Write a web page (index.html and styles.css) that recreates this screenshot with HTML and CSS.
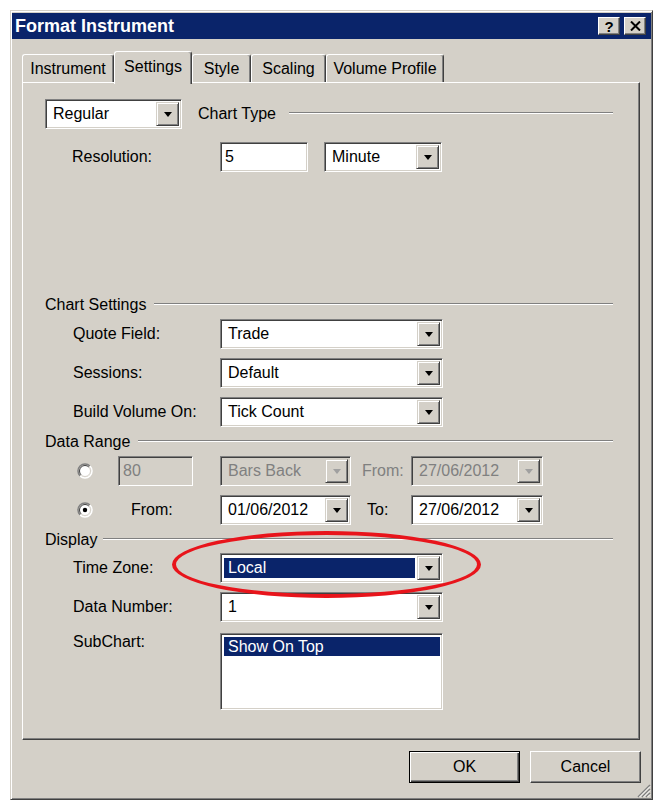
FILE: index.html
```html
<!DOCTYPE html>
<html lang="en">
<head>
    <meta charset="UTF-8">
    <meta name="viewport" content="width=device-width, initial-scale=1.0">
    <title>Format Instrument</title>
    <link rel="stylesheet" href="styles.css">
</head>
<body>
    <div class="window">
        <div class="titlebar">
            <span class="title">Format Instrument</span>
            <div class="caption-buttons">
                <span class="caption-btn help">?</span>
                <span class="caption-btn close">
                    <svg width="11" height="10" viewBox="0 0 11 10">
                        <path d="M1 0.5 L10 9.5 M10 0.5 L1 9.5" stroke="#000" stroke-width="2"/>
                    </svg>
                </span>
            </div>
        </div>

        <div class="tabs">
            <div class="tab tab-instrument">Instrument</div>
            <div class="tab tab-settings active">Settings</div>
            <div class="tab tab-style">Style</div>
            <div class="tab tab-scaling">Scaling</div>
            <div class="tab tab-volume">Volume Profile</div>
        </div>

        <div class="panel">
            <!-- chart type -->
            <div class="row row-chart-type">
                <div class="combo combo-regular"><span class="value">Regular</span><span class="drop"></span></div>
                <span class="group-title title-chart-type">Chart Type</span>
                <span class="groove"></span>
            </div>
            <div class="row row-resolution">
                <span class="label label-resolution">Resolution:</span>
                <div class="field field-resolution">5</div>
                <div class="combo combo-unit"><span class="value">Minute</span><span class="drop"></span></div>
            </div>

            <!-- chart settings -->
            <div class="group-head head-chart-settings">
                <span class="group-title">Chart Settings</span>
                <span class="groove"></span>
            </div>
            <div class="row row-field first">
                <span class="label">Quote Field:</span>
                <div class="combo combo-wide"><span class="value">Trade</span><span class="drop"></span></div>
            </div>
            <div class="row row-field">
                <span class="label">Sessions:</span>
                <div class="combo combo-wide"><span class="value">Default</span><span class="drop"></span></div>
            </div>
            <div class="row row-field build">
                <span class="label">Build Volume On:</span>
                <div class="combo combo-wide"><span class="value">Tick Count</span><span class="drop"></span></div>
            </div>

            <!-- data range -->
            <div class="group-head head-data-range">
                <span class="group-title">Data Range</span>
                <span class="groove"></span>
            </div>
            <div class="row row-range bars">
                <span class="radio">
                    <svg width="16" height="16" viewBox="0 0 16 16">
                        <circle cx="8" cy="8" r="6" fill="#fff"/>
                        <path d="M3.05 12.95 A7 7 0 0 1 12.95 3.05" stroke="#808080" stroke-width="1.5" fill="none"/>
                        <path d="M12.95 3.05 A7 7 0 0 1 3.05 12.95" stroke="#fff" stroke-width="1.5" fill="none"/>
                        <path d="M4.1 11.9 A5.5 5.5 0 0 1 11.9 4.1" stroke="#404040" stroke-width="1" fill="none"/>
                        <path d="M11.9 4.1 A5.5 5.5 0 0 1 4.1 11.9" stroke="#d4d0c8" stroke-width="1" fill="none"/>
                    </svg>
                </span>
                <div class="field field-bars disabled">80</div>
                <div class="combo combo-range disabled"><span class="value">Bars Back</span><span class="drop"></span></div>
                <span class="label label-from-off disabled">From:</span>
                <div class="combo combo-date disabled"><span class="value">27/06/2012</span><span class="drop"></span></div>
            </div>
            <div class="row row-range dates">
                <span class="radio">
                    <svg width="16" height="16" viewBox="0 0 16 16">
                        <circle cx="8" cy="8" r="6" fill="#fff"/>
                        <path d="M3.05 12.95 A7 7 0 0 1 12.95 3.05" stroke="#808080" stroke-width="1.5" fill="none"/>
                        <path d="M12.95 3.05 A7 7 0 0 1 3.05 12.95" stroke="#fff" stroke-width="1.5" fill="none"/>
                        <path d="M4.1 11.9 A5.5 5.5 0 0 1 11.9 4.1" stroke="#404040" stroke-width="1" fill="none"/>
                        <path d="M11.9 4.1 A5.5 5.5 0 0 1 4.1 11.9" stroke="#d4d0c8" stroke-width="1" fill="none"/>
                        <circle cx="8" cy="8" r="2.2" fill="#000"/>
                    </svg>
                </span>
                <span class="label label-from">From:</span>
                <div class="combo combo-range"><span class="value">01/06/2012</span><span class="drop"></span></div>
                <span class="label label-to">To:</span>
                <div class="combo combo-date"><span class="value">27/06/2012</span><span class="drop"></span></div>
            </div>

            <!-- display -->
            <div class="group-head head-display">
                <span class="group-title">Display</span>
                <span class="groove"></span>
            </div>
            <div class="row row-field tz">
                <span class="label">Time Zone:</span>
                <div class="combo combo-wide"><span class="value selected">Local</span><span class="drop"></span></div>
            </div>
            <div class="row row-field">
                <span class="label">Data Number:</span>
                <div class="combo combo-wide"><span class="value">1</span><span class="drop"></span></div>
            </div>
            <div class="row row-list">
                <span class="label">SubChart:</span>
                <div class="listbox">
                    <div class="list-item selected">Show On Top</div>
                </div>
            </div>
        </div>

        <div class="footer">
            <button class="btn default">OK</button>
            <button class="btn">Cancel</button>
        </div>

        <svg class="grip" width="16" height="16" viewBox="0 0 16 16">
            <path d="M15 3 L3 15 M15 7 L7 15 M15 11 L11 15" stroke="#808080" stroke-width="1.5"/>
            <path d="M15 4.5 L4.5 15 M15 8.5 L8.5 15 M15 12.5 L12.5 15" stroke="#fff" stroke-width="1"/>
        </svg>

        <div class="callout"></div>
    </div>
</body>
</html>
```

FILE: styles.css
```css
* {
    box-sizing: border-box;
}
body {
    margin: 0;
    background-color: #fff;
    font-family: "Liberation Sans", Arial, sans-serif;
    font-size: 16px;
    color: #000;
}

/* dialog frame */
.window {
    position: relative;
    display: flex;
    flex-direction: column;
    width: 643px;
    height: 790px;
    margin: 10px 0 0 10px;
    padding: 2px 1px 1px 1px;
    background-color: #d4d0c8;
    border: 1px solid;
    border-color: #d4d0c8 #404040 #404040 #d4d0c8;
    box-shadow: inset 1px 1px 0 #fff, inset -1px -1px 0 #808080;
}
.titlebar {
    display: flex;
    align-items: center;
    justify-content: space-between;
    height: 26px;
    padding: 0 5px 0 3px;
    background-color: #0a246a;
}
.title {
    color: #fff;
    font-weight: bold;
    font-size: 18px;
}
.caption-buttons {
    display: flex;
    gap: 4px;
}
.caption-btn {
    display: flex;
    align-items: center;
    justify-content: center;
    width: 22px;
    height: 18px;
    background-color: #d4d0c8;
    border: 1px solid;
    border-color: #fff #404040 #404040 #fff;
    box-shadow: inset -1px -1px 0 #808080;
    font-weight: bold;
    font-size: 15px;
    line-height: 1;
}

/* tab strip */
.tabs {
    display: flex;
    align-items: flex-end;
    height: 43px;
    padding-left: 10px;
}
.tab {
    display: flex;
    align-items: center;
    justify-content: center;
    height: 28px;
    padding-top: 1px;
    background-color: #d4d0c8;
    border: 1px solid;
    border-color: #fff #404040 transparent #fff;
    border-bottom: 0;
    border-radius: 3px 3px 0 0;
    box-shadow: inset -1px 0 0 #808080;
}
.tab.active {
    position: relative;
    z-index: 1;
    height: 33px;
    margin-bottom: -2px;
    padding-bottom: 4px;
}
.tab-instrument { width: 92px; }
.tab-settings { width: 78px; }
.tab-style { width: 59px; }
.tab-scaling { width: 75px; }
.tab-volume { width: 118px; }

.panel {
    display: flex;
    flex-direction: column;
    width: 618px;
    height: 658px;
    margin-left: 10px;
    padding: 16px 26px 0 22px;
    border: 1px solid;
    border-color: #fff #404040 #404040 #fff;
    box-shadow: inset -1px -1px 0 #808080;
}

/* rows */
.row {
    display: flex;
    align-items: center;
    height: 30px;
    flex-shrink: 0;
}
.label {
    flex-shrink: 0;
    white-space: nowrap;
}
.row-resolution { margin-top: 13px; }
.label-resolution {
    width: 148px;
    margin-left: 27px;
}
.row-field { margin-top: 9px; }
.row-field.first { margin-top: 5px; }
.row-field.tz { margin-top: 4px; }
.row-field .label,
.row-list .label {
    width: 147px;
    margin-left: 28px;
}

.group-head {
    display: flex;
    align-items: center;
    height: 18px;
    flex-shrink: 0;
}
.group-title {
    white-space: nowrap;
}
.groove {
    flex: 1;
    height: 2px;
    margin: 0 0 3px 8px;
    border-top: 1px solid #808080;
    border-bottom: 1px solid #fff;
}
.title-chart-type { margin-left: 16px; }
.row-chart-type .groove { margin-left: 13px; }
.head-chart-settings { margin-top: 124px; }
.head-data-range { margin-top: 6px; }
.head-display { margin-top: 6px; }
.head-display .groove { margin-left: 6px; }

/* inputs */
.field,
.combo,
.listbox {
    flex-shrink: 0;
    background-color: #fff;
    border: 1px solid;
    border-color: #808080 #fff #fff #808080;
    box-shadow: inset 1px 1px 0 #404040, inset -1px -1px 0 #d4d0c8;
}
.field {
    display: flex;
    align-items: center;
    height: 30px;
    padding-left: 4px;
}
.combo {
    display: flex;
    height: 30px;
    padding: 2px;
}
.combo .value {
    flex: 1;
    display: flex;
    align-items: center;
    margin: 2px 2px 2px 1px;
    padding-left: 4px;
    white-space: nowrap;
}
.combo .value.selected {
    background-color: #0a246a;
    color: #fff;
}
.drop {
    display: flex;
    align-items: center;
    justify-content: center;
    width: 23px;
    background-color: #d4d0c8;
    border: 1px solid;
    border-color: #d4d0c8 #404040 #404040 #d4d0c8;
    box-shadow: inset 1px 1px 0 #fff, inset -1px -1px 0 #808080;
}
.drop::after {
    content: "";
    border-style: solid;
    border-width: 5px 4.5px 0;
    border-color: #000 transparent transparent;
}
.disabled,
.combo.disabled .value {
    color: #808080;
}
.field.disabled,
.combo.disabled {
    background-color: #d4d0c8;
}
.combo.disabled .drop::after {
    border-top-color: #a0a0a0;
}

.combo-regular { width: 137px; }
.field-resolution { width: 88px; }
.combo-unit {
    width: 118px;
    margin-left: 16px;
}
.combo-wide { width: 223px; }

/* data range rows */
.row-range.bars { margin-top: 5px; }
.row-range.dates { margin-top: 9px; }
.radio {
    display: flex;
    width: 16px;
    height: 16px;
    margin-left: 32px;
}
.field-bars {
    width: 75px;
    margin-left: 25px;
}
.combo-range {
    width: 131px;
}
.bars .combo-range { margin-left: 27px; }
.label-from-off {
    width: 49px;
    margin-left: 11px;
}
.combo-date { width: 132px; }
.label-from {
    width: 89px;
    margin-left: 38px;
}
.label-to {
    width: 44px;
    margin-left: 16px;
}

/* subchart list */
.row-list {
    align-items: flex-start;
    height: 77px;
    margin-top: 11px;
}
.row-list .label {
    line-height: 18px;
}
.listbox {
    width: 223px;
    height: 77px;
    padding: 3px 2px 2px 3px;
}
.list-item {
    height: 19px;
    line-height: 19px;
    padding-left: 4px;
}
.list-item.selected {
    background-color: #0a246a;
    color: #fff;
}

/* dialog buttons */
.footer {
    display: flex;
    justify-content: flex-end;
    gap: 10px;
    margin-top: 11px;
    padding-right: 10px;
}
.btn {
    width: 111px;
    height: 32px;
    padding: 0;
    font-family: inherit;
    font-size: 16px;
    color: #000;
    background-color: #d4d0c8;
    border: 1px solid;
    border-color: #fff #404040 #404040 #fff;
    box-shadow: inset -1px -1px 0 #808080;
}
.btn.default {
    border-color: #000;
    box-shadow: inset 1px 1px 0 #fff, inset -1px -1px 0 #404040, inset -2px -2px 0 #808080;
}
.grip {
    position: absolute;
    right: 1px;
    bottom: 1px;
}

/* red annotation ring around the time zone selector */
.callout {
    position: absolute;
    left: 161px;
    top: 520px;
    width: 309px;
    height: 67px;
    border: 4px solid #e8141b;
    border-radius: 50%;
    pointer-events: none;
}
```
